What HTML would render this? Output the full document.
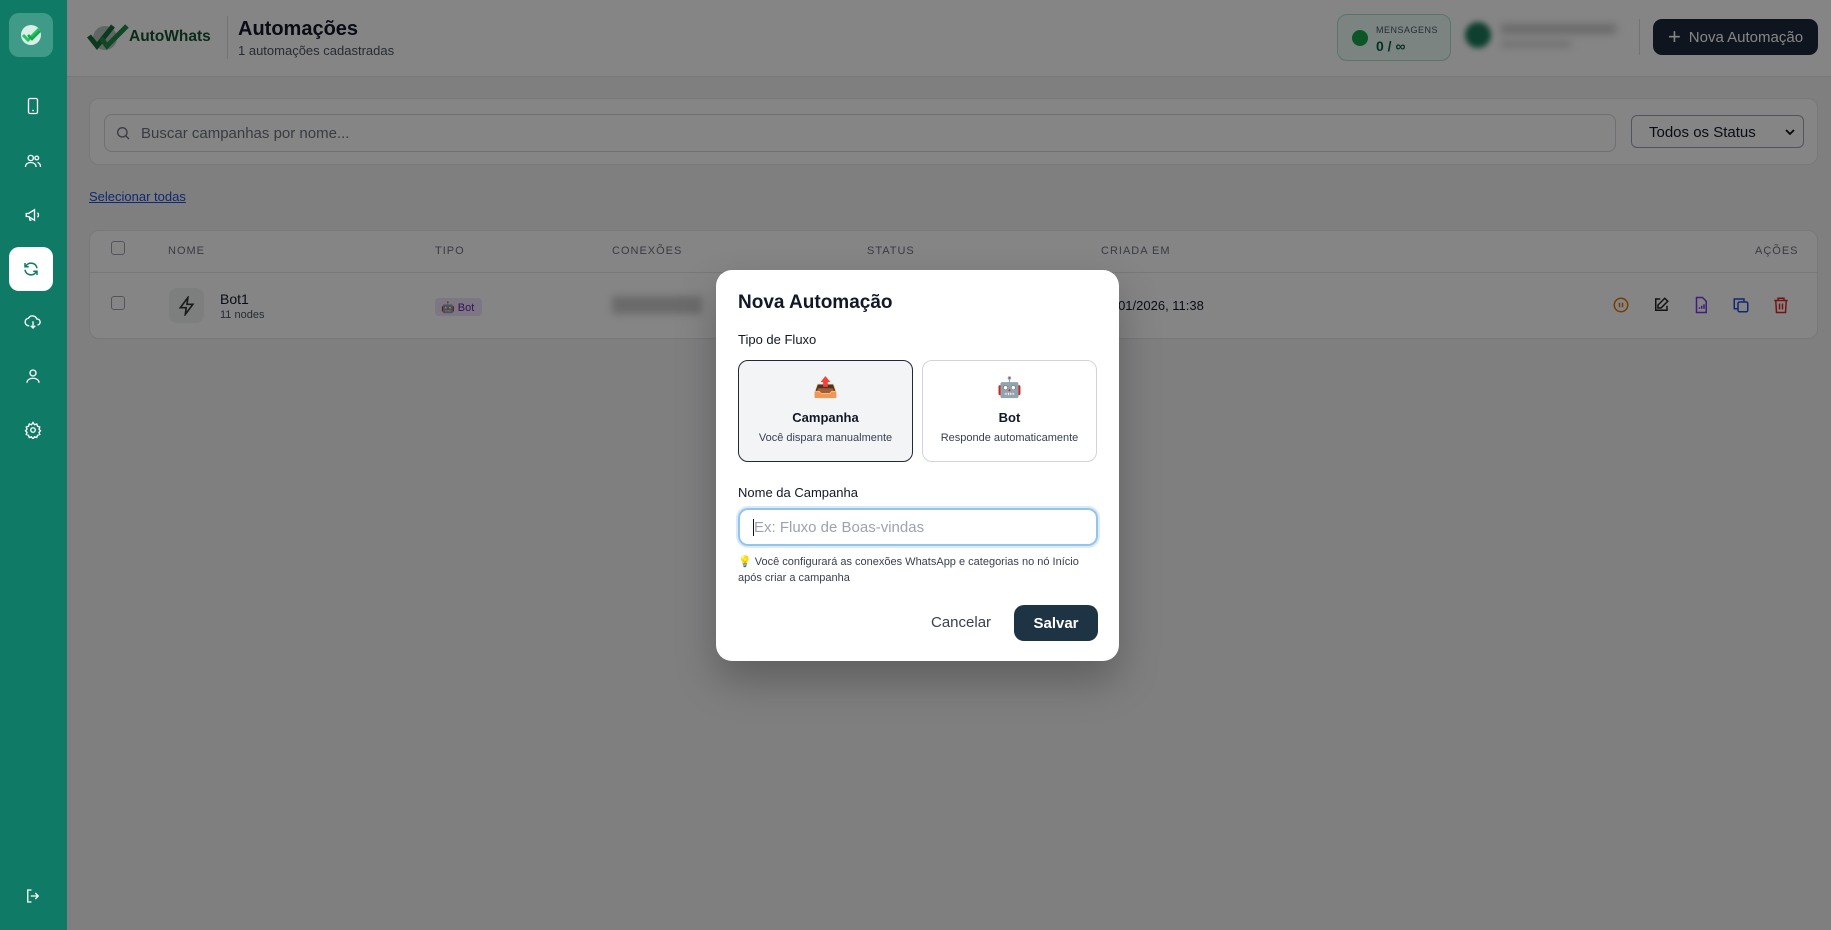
<!DOCTYPE html>
<html><head><meta charset="utf-8"><style>
*{box-sizing:border-box;margin:0;padding:0}
body{width:1831px;height:930px;overflow:hidden;font-family:"Liberation Sans","Noto Sans CJK JP",sans-serif;background:#f3f4f6;position:relative;color:#111827}
.abs{position:absolute}
.side{position:absolute;left:0;top:0;width:67px;height:930px;background:#0f7a66;z-index:30}
.sico{position:absolute;left:14px;width:38px;height:38px;display:flex;align-items:center;justify-content:center}
.hdr{position:absolute;left:67px;top:0;right:0;height:77px;background:#fff;border-bottom:1px solid #e5e7eb}
.card{position:absolute;background:#fff;border:1px solid #e5e7eb;border-radius:10px}
.th{position:absolute;top:245px;font-size:11px;letter-spacing:1px;color:#6b7280}
.overlay{position:absolute;left:0;top:0;width:1831px;height:930px;background:rgba(0,0,0,.48);z-index:20}
.modal{position:absolute;left:716px;top:270px;width:403px;height:391px;background:#fff;border-radius:16px;z-index:40;box-shadow:0 20px 40px rgba(0,0,0,.25)}
.opt{position:absolute;top:90px;width:175px;height:102px;border-radius:10px;text-align:center}
.cb{position:absolute;width:14px;height:14px;border:1.5px solid #9ca3af;border-radius:3px;background:#fff}
</style></head><body>
<div class="side">
 <div class="sico" style="left:9px;top:13px;width:44px;height:44px;background:#3f9a88;border-radius:10px">
  <svg width="26" height="26" viewBox="0 0 26 26"><circle cx="13" cy="13" r="10" fill="#d8efe9"/><path d="M5 13l5 5 11-11" stroke="#22c55e" stroke-width="3" fill="none"/><path d="M10 13l4 4 8-8" stroke="#16a34a" stroke-width="2.5" fill="none"/></svg></div>
 <div class="sico" style="top:87px"><svg width="18" height="18" viewBox="0 0 24 24" fill="none" stroke="#fff" stroke-width="1.8"><rect x="6" y="2" width="12" height="20" rx="2"/><path d="M11 18h2"/></svg></div>
 <div class="sico" style="top:142px"><svg width="18" height="18" viewBox="0 0 24 24" fill="none" stroke="#fff" stroke-width="1.8"><circle cx="9" cy="8" r="3.5"/><path d="M2 20c0-4 3-6 7-6s7 2 7 6"/><circle cx="17" cy="8" r="2.5"/><path d="M18 14c2.5.5 4 2.5 4 6"/></svg></div>
 <div class="sico" style="top:196px"><svg width="18" height="18" viewBox="0 0 24 24" fill="none" stroke="#fff" stroke-width="1.8"><path d="M3 10v4h3l8 5V5L6 10H3z"/><path d="M7 14l1 5h2"/><path d="M18 9a4 4 0 010 6"/></svg></div>
 <div class="sico" style="top:247px;left:9px;width:44px;height:44px;background:#fff;border-radius:10px"><svg width="18" height="18" viewBox="0 0 24 24" fill="none" stroke="#0f7a66" stroke-width="2"><path d="M20 11a8 8 0 00-14-4L4 9M4 4v5h5"/><path d="M4 13a8 8 0 0014 4l2-2M20 20v-5h-5"/></svg></div>
 <div class="sico" style="top:303px"><svg width="18" height="18" viewBox="0 0 24 24" fill="none" stroke="#fff" stroke-width="1.8"><path d="M7 17a5 5 0 01-1-10 6 6 0 0111 1 4 4 0 011 8"/><path d="M12 11v9M9 17l3 3 3-3"/></svg></div>
 <div class="sico" style="top:357px"><svg width="18" height="18" viewBox="0 0 24 24" fill="none" stroke="#fff" stroke-width="1.8"><circle cx="12" cy="8" r="4"/><path d="M4 21c0-4 4-6 8-6s8 2 8 6"/></svg></div>
 <div class="sico" style="top:411px"><svg width="18" height="18" viewBox="0 0 24 24" fill="none" stroke="#fff" stroke-width="1.8"><circle cx="12" cy="12" r="3"/><path d="M12 2l2 3 3-1 1 3 3 1-1 3 2 2-2 2 1 3-3 1-1 3-3-1-2 3-2-3-3 1-1-3-3-1 1-3-2-2 2-2-1-3 3-1 1-3 3 1z"/></svg></div>
 <div class="sico" style="top:877px"><svg width="18" height="18" viewBox="0 0 24 24" fill="none" stroke="#fff" stroke-width="1.8"><path d="M10 4H5v16h5M15 8l4 4-4 4M9 12h10"/></svg></div>
</div>

<div class="hdr">
 <svg class="abs" style="left:20px;top:22px" width="44" height="30" viewBox="0 0 44 30"><circle cx="18" cy="16" r="12" fill="#b8c4bf"/><path d="M2 14l8 10L26 4" stroke="#166b3a" stroke-width="5" fill="none"/><path d="M14 16l6 8L40 4" stroke="#1f8a4a" stroke-width="5" fill="none"/></svg>
 <div class="abs" style="left:62px;top:28px;font-size:15.5px;font-weight:bold;color:#14532d">AutoWhats</div>
 <div class="abs" style="left:160px;top:16px;width:1px;height:43px;background:#ddd"></div>
 <div class="abs" style="left:171px;top:18px;font-size:20px;font-weight:bold">Automações</div>
 <div class="abs" style="left:171px;top:43px;font-size:13px;color:#4b5563">1 automações cadastradas</div>
 <div class="abs" style="left:1270px;top:14px;width:114px;height:47px;border:1px solid #a7e3c8;background:#ecfdf5;border-radius:10px">
  <div class="abs" style="left:14px;top:15px;width:16px;height:16px;border-radius:50%;background:#16a34a"></div>
  <div class="abs" style="left:38px;top:10px;font-size:9px;color:#4b5563;letter-spacing:.5px">MENSAGENS</div>
  <div class="abs" style="left:38px;top:23px;font-size:14px;font-weight:bold;color:#065f46">0 / ∞</div>
 </div>
 <div class="abs" style="left:1398px;top:22px;width:26px;height:26px;border-radius:50%;background:#1b7a5a;filter:blur(3px)"></div>
 <div class="abs" style="left:1434px;top:24px;width:115px;height:10px;background:#ccc;filter:blur(4px)"></div>
 <div class="abs" style="left:1434px;top:40px;width:70px;height:8px;background:#ddd;filter:blur(4px)"></div>
 <div class="abs" style="left:1572px;top:19px;width:1px;height:36px;background:#ddd"></div>
 <div class="abs" style="left:1586px;top:19px;width:165px;height:36px;background:#1e293b;border-radius:9px;color:#fff;font-size:15px;display:flex;align-items:center;justify-content:center;gap:8px"><span style="font-size:22px;font-weight:300">+</span>Nova Automação</div>
</div>

<div class="card" style="left:89px;top:98px;width:1729px;height:67px">
 <div class="abs" style="left:14px;top:15px;width:1512px;height:38px;border:1px solid #d1d5db;border-radius:8px">
  <svg class="abs" style="left:10px;top:10px" width="16" height="16" viewBox="0 0 24 24" fill="none" stroke="#6b7280" stroke-width="2"><circle cx="11" cy="11" r="7"/><path d="M16 16l5 5"/></svg>
  <div class="abs" style="left:36px;top:10px;font-size:15px;color:#6b7280">Buscar campanhas por nome...</div>
 </div>
 <div class="abs" style="left:1541px;top:16px;width:173px;height:33px;border:1px solid #9ca3af;border-radius:6px;font-size:15px;padding:8px 17px">Todos os Status<svg style="position:absolute;right:8px;top:12px" width="10" height="8" viewBox="0 0 10 8"><path d="M1 2l4 4 4-4" stroke="#111" stroke-width="1.8" fill="none"/></svg></div>
</div>
<div class="abs" style="left:89px;top:189px;font-size:13px;color:#1d4ed8;text-decoration:underline">Selecionar todas</div>

<div class="card" style="left:89px;top:230px;width:1729px;height:109px"></div>
<div class="abs" style="left:89px;top:272px;width:1729px;height:1px;background:#e5e7eb"></div>
<div class="cb" style="left:111px;top:241px"></div>
<div class="th" style="left:168px">NOME</div>
<div class="th" style="left:435px">TIPO</div>
<div class="th" style="left:612px">CONEXÕES</div>
<div class="th" style="left:867px">STATUS</div>
<div class="th" style="left:1101px">CRIADA EM</div>
<div class="th" style="left:1755px">AÇÕES</div>
<div class="cb" style="left:111px;top:296px"></div>
<div class="abs" style="left:169px;top:288px;width:35px;height:35px;background:#eef3f2;border-radius:8px;display:flex;align-items:center;justify-content:center"><svg width="20" height="20" viewBox="0 0 24 24" fill="none" stroke="#333" stroke-width="2"><path d="M13 2L4 14h7l-1 8 9-12h-7z"/></svg></div>
<div class="abs" style="left:220px;top:291px;font-size:14px">Bot1</div>
<div class="abs" style="left:220px;top:309px;font-size:11px;color:#4b5563">11 nodes</div>
<div class="abs" style="left:435px;top:298px;width:47px;height:18px;background:#ede4fb;border-radius:4px;font-size:11px;color:#6b21a8;padding:3px 6px">🤖 Bot</div>
<div class="abs" style="left:612px;top:296px;width:90px;height:18px;background:#ccc;filter:blur(4px)"></div>
<div class="abs" style="left:1100px;top:298px;font-size:13px">12/01/2026, 11:38</div>
<svg class="abs" style="left:1612px;top:296px" width="18" height="18" viewBox="0 0 24 24" fill="none" stroke="#d97706" stroke-width="2"><circle cx="12" cy="12" r="9"/><path d="M10 9v6M14 9v6"/></svg>
<svg class="abs" style="left:1652px;top:296px" width="18" height="18" viewBox="0 0 24 24" fill="none" stroke="#222" stroke-width="2"><path d="M11 4H5v15h15v-6"/><path d="M17 3l4 4-9 9H8v-4z"/></svg>
<svg class="abs" style="left:1692px;top:296px" width="18" height="18" viewBox="0 0 24 24" fill="none" stroke="#7c3aed" stroke-width="2"><path d="M6 2h8l5 5v15H6z"/><path d="M10 17v-2M13 17v-4M16 17v-6"/></svg>
<svg class="abs" style="left:1732px;top:296px" width="18" height="18" viewBox="0 0 24 24" fill="none" stroke="#1d4ed8" stroke-width="2"><rect x="8" y="8" width="13" height="13" rx="2"/><path d="M16 8V4H3v13h5"/></svg>
<svg class="abs" style="left:1772px;top:296px" width="18" height="18" viewBox="0 0 24 24" fill="none" stroke="#dc2626" stroke-width="2"><path d="M3 6h18M8 6V3h8v3M5 6l1 16h12l1-16M10 10v8M14 10v8"/></svg>

<div class="overlay"></div>

<div class="modal">
 <div class="abs" style="left:22px;top:22px;font-size:19px;font-weight:bold">Nova Automação</div>
 <div class="abs" style="left:22px;top:62px;font-size:13px">Tipo de Fluxo</div>
 <div class="opt" style="left:22px;background:#f3f4f6;border:1px solid #1f2937">
  <div style="margin-top:14px;font-size:20px">📤</div>
  <div style="margin-top:10px;font-size:13px;font-weight:bold">Campanha</div>
  <div style="margin-top:7px;font-size:11px;color:#374151">Você dispara manualmente</div>
 </div>
 <div class="opt" style="left:206px;background:#fff;border:1px solid #d1d5db">
  <div style="margin-top:14px;font-size:20px">🤖</div>
  <div style="margin-top:10px;font-size:13px;font-weight:bold">Bot</div>
  <div style="margin-top:7px;font-size:11px;color:#374151">Responde automaticamente</div>
 </div>
 <div class="abs" style="left:22px;top:215px;font-size:13px">Nome da Campanha</div>
 <div class="abs" style="left:22px;top:238px;width:360px;height:38px;border:2px solid #93c5e8;border-radius:10px;box-shadow:0 0 0 2px #dbeafe">
  <div class="abs" style="left:13px;top:9px;width:1px;height:17px;background:#111"></div>
  <div class="abs" style="left:14px;top:9px;font-size:15px;color:#9ca3af">Ex: Fluxo de Boas-vindas</div>
 </div>
 <div class="abs" style="left:22px;top:284px;width:360px;font-size:11px;line-height:16px;color:#374151">💡 Você configurará as conexões WhatsApp e categorias no nó Início após criar a campanha</div>
 <div class="abs" style="left:215px;top:344px;font-size:15px;color:#374151">Cancelar</div>
 <div class="abs" style="left:298px;top:335px;width:84px;height:36px;background:#1e3344;border-radius:10px;color:#fff;font-size:15px;font-weight:bold;display:flex;align-items:center;justify-content:center">Salvar</div>
</div>
</body></html>
